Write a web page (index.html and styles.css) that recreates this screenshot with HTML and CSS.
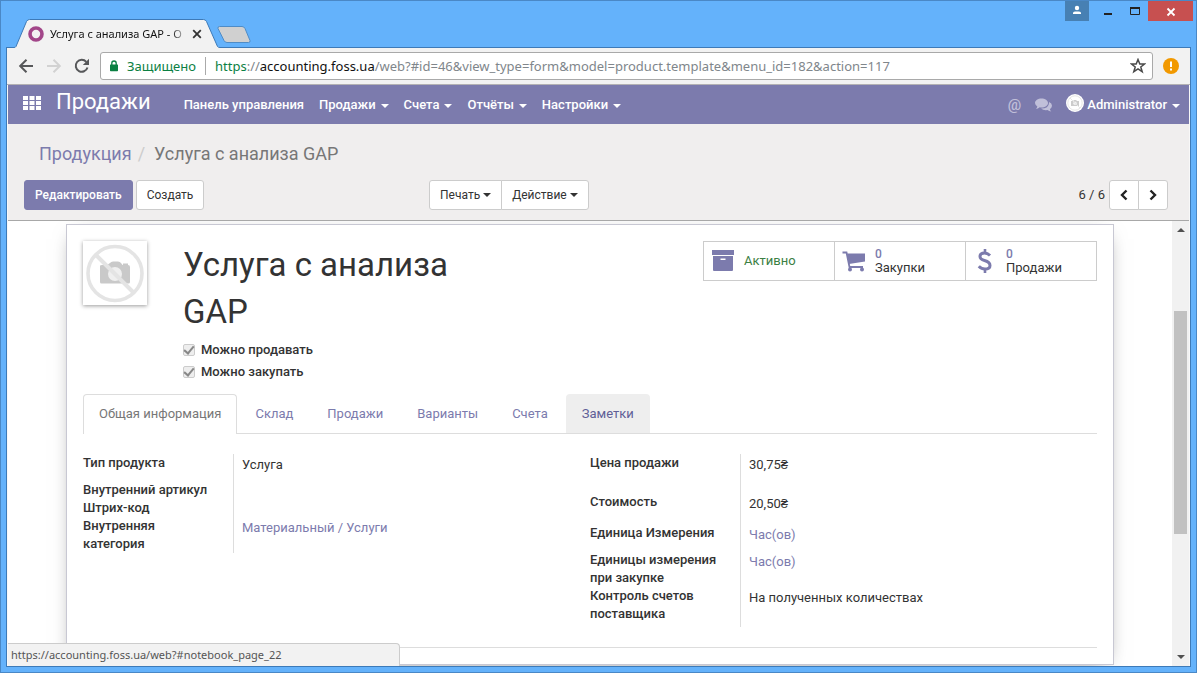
FILE: index.html
```html
<!DOCTYPE html>
<html lang="ru">
<head>
<meta charset="utf-8">
<title>Услуга с анализа GAP - Odoo</title>
<link rel="stylesheet" href="styles.css">
</head>
<body>
<div class="window">
  <header class="titlebar">
    <div class="tab">
      <svg class="tab-shape" width="206" height="29" viewBox="0 0 206 29"><path d="M0 28.5L2 27.500L12.500 2.500Q13.500 .5 15.500 .5H189.500Q191.500 .5 192.500 2.500L203.500 27.500L206 28.500V29H0Z" fill="#f2f2f2"/><path d="M0 28.500Q1.500 28.500 2 27.500L12.500 2.500Q13.500 .5 15.500 .5H189.500Q191.500 .5 192.500 2.500L203.500 27.500Q204 28.500 206 28.500" fill="none" stroke="#3d7ab8"/></svg>
      <svg class="favicon" width="16" height="16" viewBox="0 0 16 16"><circle cx="8" cy="8" r="6" fill="none" stroke="#a24689" stroke-width="3.600"/></svg>
      <span class="tab-title">Услуга с анализа GAP - O</span>
      <button class="tab-close" aria-label="Закрыть вкладку"><svg width="10" height="10" viewBox="0 0 10 10"><path d="M1.200 1.200L8.800 8.800M8.800 1.200L1.200 8.800" stroke="#333" stroke-width="1.800"/></svg></button>
    </div>
    <button class="new-tab" aria-label="Новая вкладка"><svg width="35" height="18" viewBox="0 0 35 18"><path d="M2.500 .5H25Q27 .5 28 2.500L33 14.500Q33.500 16.500 31.500 16.500H10Q8 16.500 7 14.500L1 2.500Q.5 .5 2.500 .5Z" fill="#d0d0d0" stroke="#4f8cc6"/></svg></button>
    <div class="window-controls">
      <button class="wc wc-user" aria-label="Профиль"><svg width="24" height="20" viewBox="0 0 24 20"><circle cx="12" cy="7" r="2.200" fill="#fff"/><path d="M8 13V12Q8 10.500 10 10.500H14Q16 10.500 16 12V13Z" fill="#fff"/></svg></button>
      <button class="wc wc-min" aria-label="Свернуть"><svg width="10" height="20" viewBox="0 0 10 20"><path d="M1 12H9V14H1Z" fill="#222"/></svg></button>
      <button class="wc wc-max" aria-label="Развернуть"><svg width="10" height="20" viewBox="0 0 10 20"><path d="M.5 6.500H9.500V13.500H.5Z" fill="none" stroke="#222"/><path d="M0 6H10V8H0Z" fill="#222"/></svg></button>
      <button class="wc wc-close" aria-label="Закрыть"><svg width="45" height="20" viewBox="0 0 45 20"><path d="M19.500 7.500L26.500 14.500M26.500 7.500L19.500 14.500" stroke="#fff" stroke-width="1.800"/></svg></button>
    </div>
  </header>

  <div class="frame">
    <div class="toolbar">
      <button class="tool" aria-label="Назад"><svg width="16" height="16" viewBox="0 0 16 16"><path d="M15 8H2.500M8.500 1.800L2.200 8L8.500 14.200" fill="none" stroke="#57585a" stroke-width="2"/></svg></button>
      <button class="tool" aria-label="Вперёд"><svg width="16" height="16" viewBox="0 0 16 16"><path d="M1 8H13.500M7.500 1.800L13.800 8L7.500 14.200" fill="none" stroke="#d2d2d2" stroke-width="2"/></svg></button>
      <button class="tool" aria-label="Обновить"><svg width="16" height="16" viewBox="0 0 16 16"><path d="M13.500 9.500A6 6 0 1 1 12.300 3.800" fill="none" stroke="#57585a" stroke-width="2"/><path d="M15 .8V7H8.800Z" fill="#57585a"/></svg></button>
      <div class="address">
        <svg width="10" height="12" viewBox="0 0 10 12"><path d="M1.500 4.500H8.500Q9 4.500 9 5V10.500Q9 11.200 8.300 11.200H1.700Q1 11.200 1 10.500V5Q1 4.500 1.500 4.500Z" fill="#0b8043"/><path d="M2.800 5V3.200A2.200 2.200 0 0 1 7.200 3.200V5" fill="none" stroke="#0b8043" stroke-width="1.300"/></svg>
        <span class="secure">Защищено</span>
        <span class="url"><span class="scheme">https</span>://<span class="host">accounting.foss.ua</span>/web?#id=46&amp;view_type=form&amp;model=product.template&amp;menu_id=182&amp;action=117</span>
        <button class="star" aria-label="Добавить в закладки"><svg width="16" height="16" viewBox="0 0 16 16"><path d="M8 1.500L9.800 6H14.600L10.800 9L12.200 13.700L8 10.900L3.800 13.700L5.200 9L1.400 6H6.200Z" fill="none" stroke="#4a4a4a" stroke-width="1.500"/></svg></button>
      </div>
      <button class="tool notice" aria-label="Меню"><svg width="16" height="16" viewBox="0 0 16 16"><circle cx="8" cy="8" r="8" fill="#f29900"/><path d="M7 3.500H9V9H7ZM7 10.500H9V12.500H7Z" fill="#fff"/></svg></button>
    </div>

    <nav class="navbar">
      <button class="apps" aria-label="Приложения"><svg width="18" height="14" viewBox="0 0 18 14"><path d="M0 0H5V4H0ZM6.500 0H11.500V4H6.500ZM13 0H18V4H13ZM0 5H5V9H0ZM6.500 5H11.500V9H6.500ZM13 5H18V9H13ZM0 10H5V14H0ZM6.500 10H11.500V14H6.500ZM13 10H18V14H13Z" fill="#fff"/></svg></button>
      <a class="brand" href="#">Продажи</a>
      <a class="nav-item" href="#">Панель управления</a>
      <a class="nav-item" href="#">Продажи<i class="caret"></i></a>
      <a class="nav-item" href="#">Счета<i class="caret"></i></a>
      <a class="nav-item" href="#">Отчёты<i class="caret"></i></a>
      <a class="nav-item" href="#">Настройки<i class="caret"></i></a>
      <div class="systray">
        <a class="at" href="#">@</a>
        <a class="chat" href="#" aria-label="Сообщения"><svg width="17" height="14" viewBox="0 0 17 14"><path d="M6.500 .5C10 .5 13 2.400 13 5S10 9.500 6.500 9.500Q5.500 9.500 4.700 9.300Q3 10.700 .8 11Q2 10 2.300 8.400Q0 7 0 5C0 2.400 3 .5 6.500 .5Z" fill="#c0bfd9"/><path d="M14 4Q17 5.200 17 7.800Q17 9.800 14.900 11.200Q15.200 12.600 16.300 13.500Q14 13.400 12.500 12.100Q8.500 12.700 6 10.500Q13.800 10.500 14 5Z" fill="#c0bfd9"/></svg></a>
        <a class="user" href="#"><svg width="18" height="18" viewBox="0 0 18 18"><circle cx="9" cy="9" r="9" fill="#fff"/><circle cx="9" cy="9" r="7.200" fill="none" stroke="#e6e6e6"/><path d="M5 7H7L8 6H10L11 7H13V12H5Z" fill="#ccc"/><circle cx="9" cy="9.300" r="1.800" fill="#f1f1f1"/><path d="M4 4L14 14" stroke="#e6e6e6"/></svg>Administrator<i class="caret"></i></a>
      </div>
    </nav>

    <section class="control-panel">
      <div class="breadcrumb"><a href="#">Продукция</a><span class="slash">/</span><span>Услуга с анализа GAP</span></div>
      <div class="cp-row">
        <div class="cp-left"><button class="btn btn-primary">Редактировать</button><button class="btn">Создать</button></div>
        <div class="cp-right">
          <div class="btn-group"><button class="btn">Печать<i class="caret"></i></button><button class="btn">Действие<i class="caret"></i></button></div>
          <div class="pager"><span>6 / 6</span>
            <div class="btn-group"><button class="btn btn-icon" aria-label="Предыдущая"><svg width="8" height="12" viewBox="0 0 8 12"><path d="M6.500 1.500L2 6L6.500 10.500" fill="none" stroke="#222" stroke-width="2.400"/></svg></button><button class="btn btn-icon" aria-label="Следующая"><svg width="8" height="12" viewBox="0 0 8 12"><path d="M1.500 1.500L6 6L1.500 10.500" fill="none" stroke="#222" stroke-width="2.400"/></svg></button></div>
          </div>
        </div>
      </div>
    </section>

    <div class="viewport">
      <main class="pane">
        <article class="sheet">
          <div class="record-head">
            <div class="thumb">
              <svg width="64" height="64" viewBox="0 0 64 64"><path d="M19 24H24L27 22Q28 20.500 30 20.500H35Q37 20.500 38 22L39.500 24H40V22.500H45V24Q47 24 47 26V41Q47 42.500 45.500 42.500H18.500Q17 42.500 17 41V25Q17 24 19 24Z" fill="#c9c9c9"/><circle cx="32" cy="33" r="7" fill="#efefef"/><circle cx="32" cy="32.500" r="27" fill="none" stroke="#e4e4e4" stroke-width="3.600"/><path d="M13 14L51 52" stroke="#e4e4e4" stroke-width="4"/></svg>
            </div>
            <div class="title-block">
              <h1>Услуга с анализа GAP</h1>
              <label class="check"><input type="checkbox" checked disabled>Можно продавать</label>
              <label class="check"><input type="checkbox" checked disabled>Можно закупать</label>
            </div>
            <div class="stats">
              <button class="stat"><svg width="24" height="24" viewBox="0 0 24 24"><path d="M1 1H23V6H1ZM2 7H22V21Q22 22 21 22H3Q2 22 2 21ZM9.500 9.500V11H14.500V9.500Z" fill="#7c7bad" fill-rule="evenodd"/></svg><span class="active">Активно</span></button>
              <button class="stat"><svg width="24" height="24" viewBox="0 0 24 24"><path d="M.5 3.500H4.500L7.500 18H21" fill="none" stroke="#7c7bad" stroke-width="1.800"/><path d="M5 4.500H23V12.500L7 15Z" fill="#7c7bad"/><circle cx="8" cy="20.500" r="2" fill="#7c7bad"/><circle cx="20" cy="20.500" r="2" fill="#7c7bad"/></svg><span><b>0</b>Закупки</span></button>
              <button class="stat"><svg width="24" height="24" viewBox="0 0 24 24"><path d="M17 6.500Q14.500 4 11.500 4Q7 4 7 7.500Q7 10.300 11.500 11.500Q17 13 17 16.500Q17 20 12 20Q8.500 20 5.800 17.200" fill="none" stroke="#7c7bad" stroke-width="3"/><path d="M12 0V4M12 20V24" stroke="#7c7bad" stroke-width="2.600"/></svg><span><b>0</b>Продажи</span></button>
            </div>
          </div>

          <div class="tabs">
            <a class="page-tab current" href="#">Общая информация</a>
            <a class="page-tab" href="#">Склад</a>
            <a class="page-tab" href="#">Продажи</a>
            <a class="page-tab" href="#">Варианты</a>
            <a class="page-tab" href="#">Счета</a>
            <a class="page-tab hovered" href="#">Заметки</a>
          </div>

          <div class="groups">
            <dl class="group">
              <dt>Тип продукта</dt><dd>Услуга</dd>
              <dt>Внутренний артикул</dt><dd class="empty"></dd>
              <dt>Штрих-код</dt><dd class="empty"></dd>
              <dt>Внутренняя категория</dt><dd><a href="#">Материальный / Услуги</a></dd>
            </dl>
            <dl class="group">
              <dt>Цена продажи</dt><dd class="price">30,75₴</dd>
              <dt>Стоимость</dt><dd class="cost">20,50₴</dd>
              <dt>Единица Измерения</dt><dd><a href="#">Час(ов)</a></dd>
              <dt>Единицы измерения при закупке</dt><dd><a href="#">Час(ов)</a></dd>
              <dt class="last">Контроль счетов поставщика</dt><dd>На полученных количествах</dd>
            </dl>
          </div>
          <hr>
        </article>
      </main>
      <div class="scrollbar">
        <i class="arrow-up"></i>
        <div class="track"><div class="handle"></div></div>
        <i class="arrow-down"></i>
      </div>
      <div class="status">https://accounting.foss.ua/web?#notebook_page_22</div>
    </div>
  </div>
</div>
</body>
</html>
```
FILE: styles.css
```css
* { box-sizing: border-box; }
body { margin: 0; font: 13px/18px Roboto, sans-serif; color: #333; }
a { color: #7c7bad; text-decoration: none; }
button { border: 0; background: none; padding: 0; margin: 0; font: inherit; color: inherit; }
svg { display: block; flex: none; }

.window { height: 100vh; display: flex; flex-direction: column; border: 1px solid #4a88c6; background: #64b2fb; }

.titlebar { flex: none; height: 46px; display: flex; padding: 0 3px 0 13px; }
.tab { position: relative; width: 206px; height: 29px; margin: 18px 0 -1px; padding: 0 18px 0 14px; display: flex; align-items: center; z-index: 1; }
.tab-shape { position: absolute; left: 0; top: 0; }
.favicon, .tab-title, .tab-close { position: relative; }
.tab-title { flex: 1; margin: 0 4px 0 6px; white-space: nowrap; font: 11px/18px "Noto Sans", sans-serif; color: #111; -webkit-mask-image: linear-gradient(90deg, #000 88%, transparent); mask-image: linear-gradient(90deg, #000 88%, transparent); }
.new-tab { align-self: flex-start; margin: 25px 0 0 -3px; }
.window-controls { display: flex; margin-left: auto; height: 20px; }
.wc-user { background: #4780b3; margin-right: 14px; }
.wc-min { margin-right: 17px; }
.wc-max { margin-right: 8px; }
.wc-close { background: #c75050; }

.frame { flex: 1; min-height: 0; display: flex; flex-direction: column; margin: 0 5px 5px; padding: 0 1px; border: 1px solid #3d7ab8; background: #f8f8f8; }

.toolbar { flex: none; height: 37px; display: flex; align-items: center; gap: 12px; padding: 0 11px; margin: 0 -1px; background: #f2f2f2; border-bottom: 1px solid #b3b1b3; font-family: "Noto Sans", sans-serif; }
.address { flex: 1; height: 28px; min-width: 0; margin-left: -2px; padding: 0 6px 0 8px; display: flex; align-items: center; background: #fff; border: 1px solid #a9a9a9; border-radius: 3px; }
.secure { margin-left: 8px; padding-right: 9px; border-right: 1px solid #aaa; color: #0b8043; }
.url { flex: 1; margin-left: 9px; overflow: hidden; white-space: nowrap; color: #80868b; }
.scheme { color: #0b8043; }
.host { color: #111; }
.notice { margin-left: -2px; }

.navbar { flex: none; height: 39px; display: flex; align-items: center; gap: 15px; padding: 0 9px 0 15px; background: #7c7bad; color: #fff; font-weight: 500; }
.navbar a { color: #fff; }
.apps { padding-bottom: 4px; }
.brand { margin-right: 18px; padding-bottom: 6px; font: 22px/26px Roboto, sans-serif; }
.nav-item, .user { display: flex; align-items: center; }
.caret { border: 4px solid transparent; border-top-color: currentColor; border-bottom: 0; margin-left: 5px; }
.nav-item .caret, .user .caret { margin-top: 3px; }
.systray { display: flex; align-items: center; gap: 14px; margin-left: auto; }
.navbar .at { font-size: 15px; color: #c0bfd9; }
.user svg { margin: 0 3px 4px 0; }

.control-panel { flex: none; padding: 20px 21px 10px 16px; background: #f0eeee; border-bottom: 1px solid #a8a8a8; }
.breadcrumb { display: flex; padding-left: 15px; font-size: 18px; line-height: 20px; color: #777; }
.slash { margin: 0 9px 0 6px; color: #ccc; }
.cp-row { margin-top: 16px; display: grid; grid-template-columns: 405fr 739fr; }
.cp-left { display: flex; gap: 3px; }
.cp-right { display: flex; justify-content: space-between; }
.btn { height: 30px; padding: 0 10px; display: flex; align-items: center; justify-content: center; background: #fff; border: 1px solid #ccc; border-radius: 3px; font-size: 12px; }
.btn-primary { background: #7c7bad; border-color: #7c7bad; color: #fff; font-weight: 500; }
.btn .caret { margin-left: 3px; }
.btn-group { display: flex; }
.btn-group .btn:first-child { border-radius: 3px 0 0 3px; }
.btn-group .btn:last-child { border-radius: 0 3px 3px 0; margin-left: -1px; }
.btn-icon { width: 30px; padding: 0; }
.pager { display: flex; align-items: center; gap: 4px; }

.viewport { position: relative; flex: 1; min-height: 0; display: flex; background: #fff; }
.pane { flex: 1; overflow: hidden; padding: 3px 58px 0; }
.sheet { padding: 16px; border: 1px solid #c8c8d3; background: #fff; box-shadow: 0 5px 20px -10px rgba(0, 0, 0, .6); }

.record-head { display: flex; align-items: flex-start; }
.thumb { flex: none; width: 64px; height: 64px; box-shadow: 0 1px 4px rgba(0, 0, 0, .4); }
.title-block { width: 300px; margin-left: 36px; }
h1 { margin: 0 0 4px; font-size: 33px; line-height: 47px; font-weight: 400; }
.check { display: flex; align-items: center; gap: 6px; height: 22px; font-weight: 500; }
.check input { appearance: none; margin: 0; width: 12px; height: 12px; border: 1px solid #ccc; border-radius: 2px; background: #eee; display: grid; place-items: center; }
.check input::before { content: ""; width: 8px; height: 4px; margin-bottom: 3px; border: solid #888; border-width: 0 0 2px 2px; transform: rotate(-50deg); }
.stats { display: flex; margin-left: auto; }
.stat { width: 132px; height: 40px; padding: 0 7px; display: flex; align-items: center; gap: 9px; border: 1px solid #ccc; line-height: 14px; text-align: left; }
.stat + .stat { margin-left: -1px; }
.stat b { display: block; font-size: 12px; font-weight: 500; color: #7c7bad; }
.active { color: #3c8044; }

.tabs { display: flex; gap: 2px; margin-top: 11px; border-bottom: 1px solid #ddd; }
.page-tab { height: 39px; padding: 0 15px; line-height: 38px; border: 1px solid transparent; border-bottom: 0; border-radius: 4px 4px 0 0; }
.current { margin-bottom: -1px; height: 40px; background: #fff; border-color: #ddd; color: #777; }
.hovered { background: #eee; color: #5f5e97; }

.groups { display: grid; grid-template-columns: 1fr 1fr; padding-top: 20px; }
.group { display: grid; grid-template-columns: 150px 1fr; align-content: start; margin: 0; }
dt { padding-right: 20px; font-weight: 500; }
dd { margin: 0; padding: 0 0 6px 8px; line-height: 21px; border-left: 1px solid #ddd; }
.empty { padding: 0; }
.price { padding-bottom: 18px; }
.cost { padding-bottom: 10px; }
.last { padding-bottom: 4px; }
hr { margin: 20px 0 0; border: 0; border-top: 1px solid #ddd; }

.scrollbar { flex: none; width: 17px; display: flex; flex-direction: column; align-items: center; padding: 7px 0; background: #f1f1f1; }
.arrow-up { border: 4px solid transparent; border-top: 0; border-bottom-color: #505050; }
.arrow-down { border: 4px solid transparent; border-bottom: 0; border-top-color: #505050; }
.track { flex: 1; width: 13px; display: flex; flex-direction: column; padding: 79px 0 121px; }
.handle { flex: 1; background: #c1c1c1; }
.status { position: absolute; left: 0; bottom: 0; width: 392px; height: 23px; padding: 0 3px; background: #f2f2f2; border: 1px solid #ccc; border-width: 1px 1px 0 0; border-radius: 0 4px 0 0; font: 11px/22px "Noto Sans", sans-serif; color: #555; }
```
